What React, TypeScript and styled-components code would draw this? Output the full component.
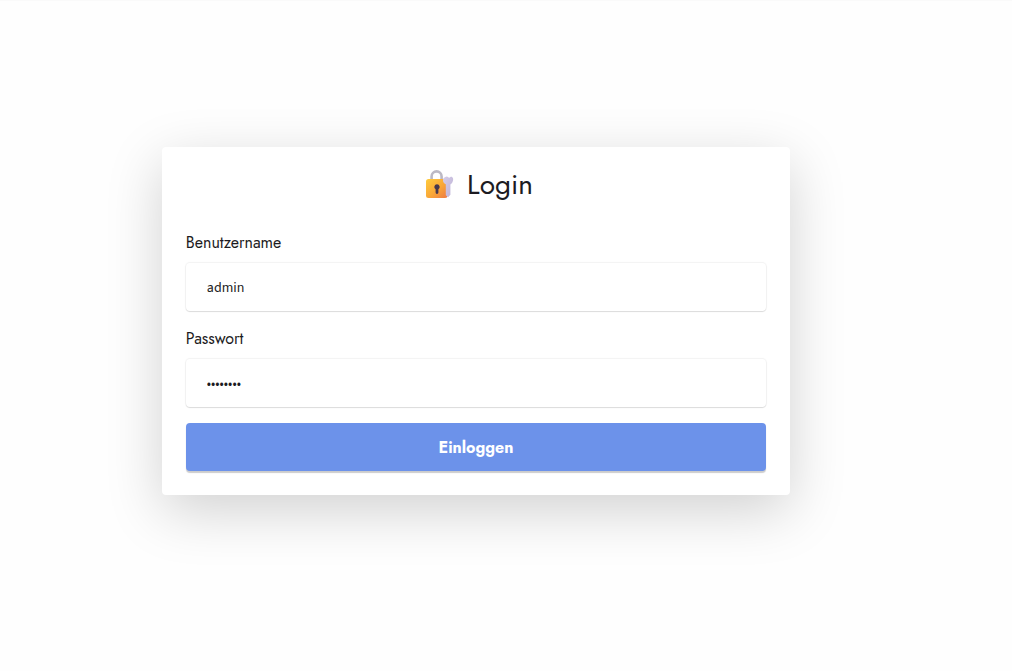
import React from "react";
import styled, { createGlobalStyle } from "styled-components";

const GlobalStyle = createGlobalStyle`
  *, *::before, *::after { box-sizing: border-box; }
  body {
    margin: 0;
    background: #fefefe;
    color: #1c1b22;
    font-family: Jost, Lato, sans-serif;
    font-size: 16px;
    line-height: 24px;
  }
`;

const Page = styled.main`
  min-height: 100vh;
  display: flex;
  justify-content: center;
  align-items: center;
  padding: 0 60px 30px 0;
  border-top: 1px solid #fafafa;
`;

const Card = styled.form`
  width: 66%;
  padding: 24px;
  display: flex;
  flex-direction: column;
  gap: 16px;
  background: #ffffff;
  border-radius: 4px;
  box-shadow: 0 16px 56px rgba(0, 0, 0, 0.18);
`;

const Title = styled.h1`
  display: flex;
  justify-content: center;
  align-items: center;
  gap: 14px;
  margin: 0 0 16px;
  padding-left: 6px;
  font-size: 28px;
  font-weight: 400;
  line-height: 28px;
`;

const Field = styled.div`
  display: flex;
  flex-direction: column;
  gap: 8px;
`;

const Input = styled.input`
  width: 100%;
  height: 48px;
  padding: 2px 21px 0;
  border: 0;
  border-radius: 4px;
  outline: none;
  background: #ffffff;
  color: #1c1b22;
  font-family: "Source Sans Pro", "Source Sans 3", Roboto, sans-serif;
  font-size: 14px;
  box-shadow: 0 0 1px 1px rgba(0, 0, 0, 0.05), 0 1px 1px rgba(0, 0, 0, 0.1);
`;

const SubmitButton = styled.button`
  height: 48px;
  border: 0;
  border-radius: 4px;
  background: #6c92ea;
  color: #ffffff;
  font-family: inherit;
  font-size: 16px;
  font-weight: 700;
  cursor: pointer;
  box-shadow: 0 2px 1px rgba(0, 0, 0, 0.2);
`;

const Icon = styled.svg`
  overflow: visible;
`;

function LockIcon() {
  return (
    <Icon width="28" height="28" viewBox="0 1 28 28" aria-hidden="true">
      <defs>
        <linearGradient id="lockBody" x1="0" y1="0" x2="1" y2="1">
          <stop offset="0" stopColor="#ffcc3d" />
          <stop offset="0.55" stopColor="#f9a637" />
          <stop offset="1" stopColor="#ed7945" />
        </linearGradient>
        <linearGradient id="lockKey" x1="0" y1="0" x2="1" y2="1">
          <stop offset="0" stopColor="#d6cde8" />
          <stop offset="1" stopColor="#bdb2d5" />
        </linearGradient>
      </defs>
      <path
        d="M6.6 10V6.4a5 5 0 0 1 10 0V10"
        fill="none"
        stroke="#bcb9c4"
        strokeWidth="2.6"
      />
      <rect x="1" y="9" width="21.5" height="19" rx="2.5" fill="url(#lockBody)" />
      <path
        d="M12 14.2a2.7 2.7 0 0 0-1.4 5v3.3a1.4 1.4 0 0 0 2.8 0v-3.3a2.7 2.7 0 0 0-1.4-5z"
        fill="#46374d"
      />
      <path
        d="M21 6.8a1.6 1.6 0 0 1 2 .3 1.7 1.7 0 0 0 2.3 0c.5-.5 1.2-.6 1.8-.2 1 .7 1.3 2.2.9 3.5-.4 1.9-1.3 3.2-2.6 4v10.4l-2.3 2.4-2.3-2V14.3c-2-1-3-2.4-2.8-4.3 0-1.5 1.2-2.9 3-3.2z"
        fill="url(#lockKey)"
      />
    </Icon>
  );
}

export default function App() {
  return (
    <>
      <GlobalStyle />
      <Page>
        <Card onSubmit={(event: React.FormEvent) => event.preventDefault()}>
          <Title>
            <LockIcon />
            Login
          </Title>
          <Field>
            <label htmlFor="username">Benutzername</label>
            <Input id="username" type="text" defaultValue="admin" />
          </Field>
          <Field>
            <label htmlFor="password">Passwort</label>
            <Input id="password" type="password" defaultValue="password" />
          </Field>
          <SubmitButton type="submit">Einloggen</SubmitButton>
        </Card>
      </Page>
    </>
  );
}
